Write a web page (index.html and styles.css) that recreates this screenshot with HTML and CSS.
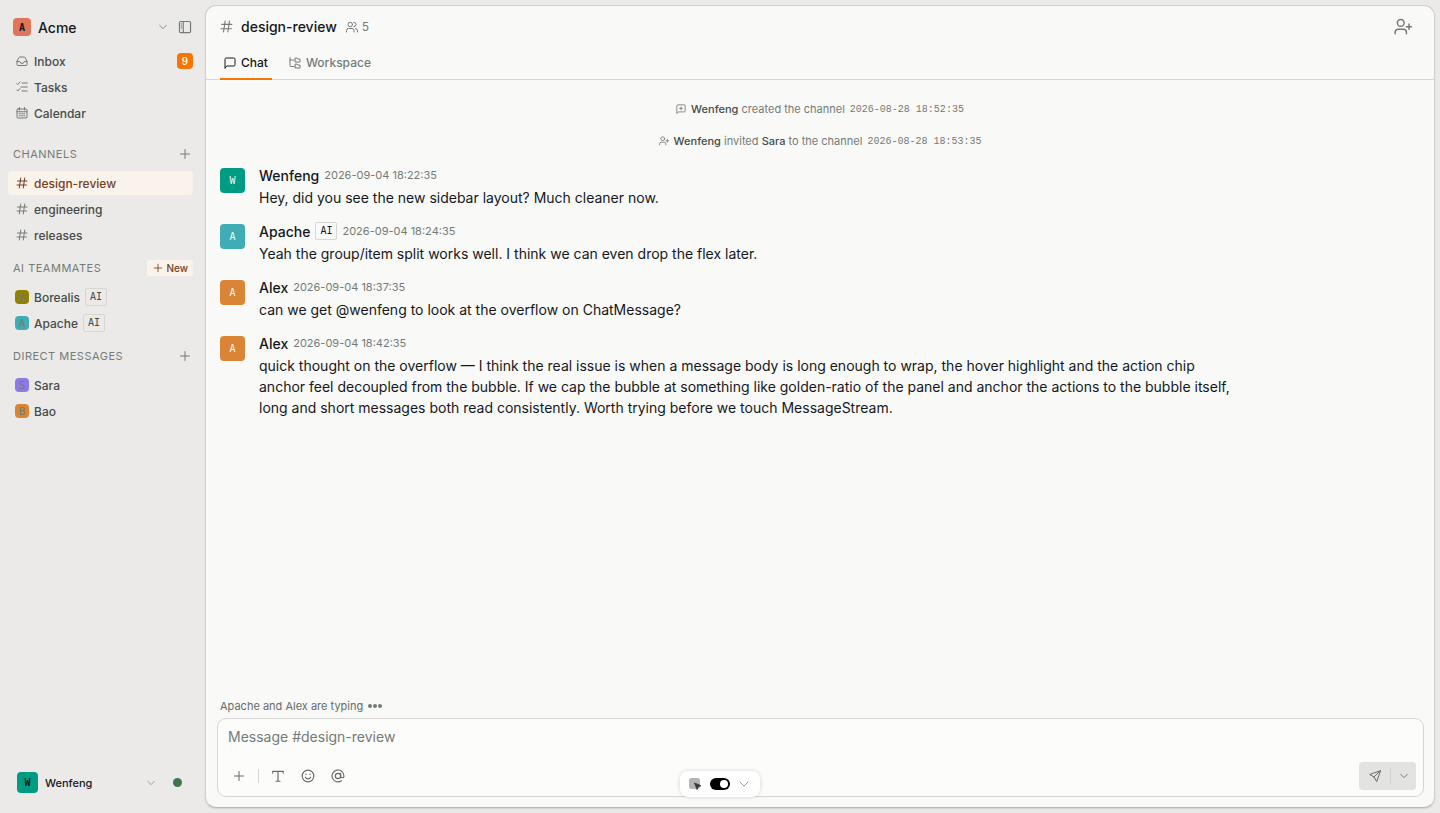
FILE: index.html
```html
<!DOCTYPE html>
<html lang="en">
<head>
<meta charset="utf-8">
<title>design-review – Acme</title>
<link rel="stylesheet" href="styles.css">
</head>
<body>
<svg class="sprite" aria-hidden="true">
  <symbol id="chevron" viewBox="0 0 24 24"><path d="m4 8 8 8 8-8"/></symbol>
  <symbol id="plus" viewBox="0 0 24 24"><path d="M12 3v18M3 12h18"/></symbol>
  <symbol id="hash" viewBox="0 0 24 24"><path d="M3 8h19M2 16h19M9.500 2l-3 20M17.500 2l-3 20"/></symbol>
  <symbol id="user-plus" viewBox="0 0 24 24"><circle cx="9" cy="6.500" r="4.500"/><path d="M1.500 21v-2a4 4 0 0 1 4-4h7a4 4 0 0 1 4 4v2M20 8v7M16.500 11.500h7"/></symbol>
</svg>
<div class="app">
  <aside class="sidebar">
    <div class="workspace">
      <button class="workspace-switch"><span class="avatar avatar-workspace coral">A</span><span class="workspace-name">Acme</span><svg class="icon icon-xs"><use href="#chevron"/></svg></button>
      <button class="icon-button" aria-label="Toggle sidebar"><svg class="icon icon-md" viewBox="0 0 24 24"><rect x="2.500" y="2.500" width="19" height="19" rx="2"/><path d="M9 2.500v19M5.500 6.500h.500M5.500 10h.500M5.500 13.500h.500"/></svg></button>
    </div>
    <nav class="list">
      <a class="item" href="#inbox"><svg class="icon icon-sm" viewBox="0 0 24 24"><path d="M2 13v6a2 2 0 0 0 2 2h16a2 2 0 0 0 2-2v-6l-3.500-7.500A2.500 2.500 0 0 0 16.300 4H7.700a2.500 2.500 0 0 0-2.200 1.500zM2 13h5.500l2 3.500h5l2-3.500H22"/></svg>Inbox<span class="count">9</span></a>
      <a class="item" href="#tasks"><svg class="icon icon-sm" viewBox="0 0 24 24"><path d="m1.500 5 2 2L8 2M1.500 18l2 2L8 15M12 4h10.500M10 12h12.500M12 20h10.500"/></svg>Tasks</a>
      <a class="item" href="#calendar"><svg class="icon icon-sm" viewBox="0 0 24 24"><rect x="2" y="4" width="20" height="18" rx="2"/><path d="M7 1v5M17 1v5M2 9.500h20M6.500 13.500h2M11 13.500h2M15.500 13.500h2M6.500 17.500h2M11 17.500h2M15.500 17.500h2"/></svg>Calendar</a>
    </nav>
    <section class="group group-first">
      <div class="group-head"><h2>CHANNELS</h2><button class="icon-button" aria-label="Add channel"><svg class="icon icon-sm"><use href="#plus"/></svg></button></div>
      <nav class="list">
        <a class="item active" href="#design-review"><svg class="icon icon-sm"><use href="#hash"/></svg>design-review</a>
        <a class="item" href="#engineering"><svg class="icon icon-sm"><use href="#hash"/></svg>engineering</a>
        <a class="item" href="#releases"><svg class="icon icon-sm"><use href="#hash"/></svg>releases</a>
      </nav>
    </section>
    <section class="group">
      <div class="group-head"><h2>AI TEAMMATES</h2><button class="new-button"><svg class="icon icon-xs"><use href="#plus"/></svg>New</button></div>
      <nav class="list">
        <a class="item item-person" href="#borealis"><span class="avatar avatar-mini olive">A</span>Borealis<span class="tag">AI</span></a>
        <a class="item item-person" href="#apache"><span class="avatar avatar-mini teal">A</span>Apache<span class="tag">AI</span></a>
      </nav>
    </section>
    <section class="group">
      <div class="group-head"><h2>DIRECT MESSAGES</h2><button class="icon-button" aria-label="New message"><svg class="icon icon-sm"><use href="#plus"/></svg></button></div>
      <nav class="list">
        <a class="item item-person" href="#sara"><span class="avatar avatar-mini violet">S</span>Sara</a>
        <a class="item item-person" href="#bao"><span class="avatar avatar-mini orange">B</span>Bao</a>
      </nav>
    </section>
    <button class="account"><span class="avatar avatar-account green">W</span><span class="account-name">Wenfeng</span><svg class="icon icon-xs"><use href="#chevron"/></svg><span class="status"></span></button>
  </aside>

  <main class="panel">
    <header class="panel-head">
      <svg class="icon icon-lg"><use href="#hash"/></svg>
      <h1>design-review</h1>
      <button class="members" aria-label="5 members"><svg class="icon icon-sm" viewBox="0 0 24 24"><circle cx="8.500" cy="7" r="4.500"/><path d="M1 22v-3a4 4 0 0 1 4-4h7a4 4 0 0 1 4 4v3M15.500 2.500a4.500 4.500 0 0 1 0 9M19 15.200a4 4 0 0 1 4 4V22"/></svg>5</button>
      <button class="icon-button invite" aria-label="Invite people"><svg class="icon icon-xl"><use href="#user-plus"/></svg></button>
    </header>
    <nav class="tabs">
      <a class="tab tab-active" href="#chat"><svg class="icon icon-sm" viewBox="0 0 24 24"><path d="M2 22V4.500A2.500 2.500 0 0 1 4.500 2h15A2.500 2.500 0 0 1 22 4.500v11a2.500 2.500 0 0 1-2.500 2.500H6z"/></svg>Chat</a>
      <a class="tab" href="#workspace"><svg class="icon icon-sm" viewBox="0 0 24 24"><path d="M2 1v16a2 2 0 0 0 2 2h6M2 6h8M13 2h3l1.500 2H22v6h-9zM13 14h3l1.500 2H22v6h-9z"/></svg>Workspace</a>
    </nav>

    <div class="stream">
      <p class="event"><svg class="icon icon-xs" viewBox="0 0 24 24"><path d="M2 22V4a2 2 0 0 1 2-2h16a2 2 0 0 1 2 2v13a2 2 0 0 1-2 2H6zM12 7v7M8.500 10.500h7"/></svg><span><b>Wenfeng</b> created the channel</span><time>2026-08-28 18:52:35</time></p>
      <p class="event"><svg class="icon icon-xs"><use href="#user-plus"/></svg><span><b>Wenfeng</b> invited <b>Sara</b> to the channel</span><time>2026-08-28 18:53:35</time></p>

      <article class="message"><span class="avatar avatar-message green">W</span><div class="body"><div class="byline"><b>Wenfeng</b><time>2026-09-04 18:22:35</time></div><p>Hey, did you see the new sidebar layout? Much cleaner now.</p></div></article>
      <article class="message"><span class="avatar avatar-message teal">A</span><div class="body"><div class="byline"><b>Apache</b><span class="tag">AI</span><time>2026-09-04 18:24:35</time></div><p>Yeah the group/item split works well. I think we can even drop the flex later.</p></div></article>
      <article class="message"><span class="avatar avatar-message orange">A</span><div class="body"><div class="byline"><b>Alex</b><time>2026-09-04 18:37:35</time></div><p>can we get @wenfeng to look at the overflow on ChatMessage?</p></div></article>
      <article class="message"><span class="avatar avatar-message orange">A</span><div class="body"><div class="byline"><b>Alex</b><time>2026-09-04 18:42:35</time></div><p>quick thought on the overflow — I think the real issue is when a message body is long enough to wrap, the hover highlight and the action chip anchor feel decoupled from the bubble. If we cap the bubble at something like golden-ratio of the panel and anchor the actions to the bubble itself, long and short messages both read consistently. Worth trying before we touch MessageStream.</p></div></article>
    </div>

    <div class="typing">Apache and Alex are typing<span class="dots"><i></i><i></i><i></i></span></div>
    <form class="composer">
      <textarea rows="1" aria-label="Message" placeholder="Message #design-review"></textarea>
      <div class="tools">
        <button type="button" class="tool" aria-label="Attach"><svg class="icon icon-sm"><use href="#plus"/></svg></button>
        <span class="divider"></span>
        <button type="button" class="tool" aria-label="Formatting"><svg class="icon icon-md" viewBox="0 0 24 24"><path d="M3 7V4h18v3M12 4v17M8.500 21h7"/></svg></button>
        <button type="button" class="tool" aria-label="Emoji"><svg class="icon icon-md" viewBox="0 0 24 24"><circle cx="12" cy="12" r="10"/><path d="M7.500 14a5 5 0 0 0 9 0M8.500 8.500v1M15.500 8.500v1"/></svg></button>
        <button type="button" class="tool" aria-label="Mention"><svg class="icon icon-md" viewBox="0 0 24 24"><circle cx="12" cy="12" r="4.500"/><path d="M16.500 7.500V13a3 3 0 0 0 5.700 0V12a10.200 10.200 0 1 0-4.200 8.200"/></svg></button>
        <div class="send">
          <button type="button" class="send-main" aria-label="Send"><svg class="icon icon-sm" viewBox="0 0 24 24"><path d="M22.500 1.500 1.500 9l8.500 5 5 8.500zM22.500 1.500 10 14"/></svg></button>
          <button type="button" class="send-more" aria-label="Send options"><svg class="icon icon-xs"><use href="#chevron"/></svg></button>
        </div>
      </div>
    </form>
  </main>

  <div class="inspector">
    <svg class="inspector-pick" viewBox="0 0 14 14"><rect x="1" y="1" width="11" height="11" rx="2.500" fill="#b5b5b5"/><path d="m6.500 6 6.500 2.700-2.700 1-1.200 2.800z" fill="#333" stroke="#444" stroke-linejoin="round"/></svg>
    <input class="switch" type="checkbox" role="switch" aria-label="Inspector" checked>
    <button class="icon-button" aria-label="Expand"><svg class="icon icon-sm"><use href="#chevron"/></svg></button>
  </div>
</div>
</body>
</html>
```
FILE: styles.css
```css
* { box-sizing: border-box; }
body {
  margin: 0;
  background: #ebeae8;
  color: #14181c;
  font-family: Inter, "Liberation Sans", sans-serif;
  font-size: 12px;
}
h1, h2, p { margin: 0; }
b { font-weight: 500; }
a { color: inherit; text-decoration: none; }
button { padding: 0; border: 0; background: none; color: inherit; font: inherit; }
.sprite { position: absolute; width: 0; height: 0; }
.icon {
  flex: none;
  fill: none;
  stroke: currentColor;
  stroke-width: 2;
  stroke-linecap: round;
  stroke-linejoin: round;
}
.icon-xs { width: 10px; height: 10px; }
.icon-sm { width: 12px; height: 12px; }
.icon-md { width: 14px; height: 14px; }
.icon-lg { width: 13px; height: 13px; }
.icon-xl { width: 18px; height: 18px; }
.icon-button { display: flex; align-items: center; justify-content: center; color: #747b77; }

.app { position: relative; display: flex; height: 100vh; }

.avatar {
  display: flex;
  flex: none;
  align-items: center;
  justify-content: center;
  border-radius: 4px;
  font-family: "DejaVu Sans Mono", monospace;
  font-size: 10px;
}
.avatar-workspace { width: 18px; height: 18px; color: #14181c; font-weight: 700; }
.avatar-mini { width: 14px; height: 14px; margin-left: -1px; font-size: 11px; color: #747b77; }
.avatar-account { width: 21px; height: 21px; font-weight: 700; }
.avatar-message { width: 25px; height: 25px; margin-top: 1px; color: #f4f8f6; }
.coral { background: #df755b; }
.olive { background: #938000; }
.teal { background: #40adb5; }
.violet { background: #8f79e8; }
.orange { background: #da8435; }
.green { background: #009b83; }

.sidebar { display: flex; flex: none; flex-direction: column; width: 205px; padding: 14px 12px 18px 8px; }
.workspace { display: flex; align-items: center; gap: 10px; height: 26px; margin-bottom: 9px; padding: 0 1px 0 5px; color: #747b77; }
.workspace-switch { display: flex; flex: 1; align-items: center; gap: 7px; }
.workspace-name { flex: 1; color: #14181c; font-size: 14px; font-weight: 500; text-align: left; }
.list { display: flex; flex-direction: column; gap: 2px; }
.item { display: flex; align-items: center; gap: 6px; height: 24px; padding-left: 8px; border-radius: 4px; color: #454c49; font-size: 12px; font-weight: 500; }
.item-person { gap: 5px; }
.item .icon { color: #747b77; }
.item.active, .item.active .icon { color: #75401f; }
.item.active { background: #f9f3ec; }
.count { display: grid; place-items: center; width: 16px; height: 16px; margin-left: auto; border-radius: 4px; background: #f77500; color: #fff; font-size: 10px; }
.group { margin-top: 12px; }
.group-first { margin-top: 20px; }
.group-head { display: flex; align-items: center; justify-content: space-between; height: 18px; margin-bottom: 8px; padding-left: 5px; }
.group-head h2 { color: #747b77; font-size: 11px; font-weight: 400; letter-spacing: 0.5px; }
.group-head .icon-button { padding-right: 2px; }
.new-button { display: flex; align-items: center; gap: 3px; height: 16px; padding: 0 5px 0 6px; border-radius: 3px; background: #f9f3ec; color: #75401f; font-size: 10px; font-weight: 500; }
.tag { padding: 0 4px; border: 1px solid #d6d7d4; border-radius: 2px; font-family: "DejaVu Sans Mono", monospace; font-size: 10px; font-weight: 400; line-height: 16px; }
.account { display: flex; align-items: center; gap: 7px; margin-top: auto; padding: 2px 11px 2px 9px; }
.account-name { flex: 1; font-size: 11px; font-weight: 500; text-align: left; }
.account .icon { color: #8c918e; }
.status { width: 9px; height: 9px; margin-left: 10px; border-radius: 50%; background: #3f764c; }

.panel {
  display: flex;
  flex: 1;
  flex-direction: column;
  min-width: 0;
  margin: 5px 5px 5px 0;
  padding-bottom: 10px;
  border: 1px solid #d0d1d0;
  border-bottom-color: #b9bbba;
  border-radius: 11px;
  background: #f9f9f7;
  box-shadow: 0 1px 2px rgba(0, 0, 0, 0.1);
}
.panel-head { display: flex; align-items: center; gap: 8px; height: 41px; padding: 0 22px 0 14px; color: #747b77; }
.panel-head h1 { color: #14181c; font-size: 14px; font-weight: 500; }
.members { display: flex; align-items: center; gap: 4px; margin-left: 1px; }
.invite { margin-left: auto; }
.tabs { display: flex; gap: 13px; height: 33px; padding: 0 14px; border-bottom: 1px solid #d6d7d4; color: #747b77; }
.tab { display: flex; align-items: center; gap: 5px; height: 33px; padding: 0 4px; border-bottom: 2px solid transparent; font-weight: 500; }
.tab-active { border-color: #f77500; color: #14181c; }

.stream { flex: 1; padding: 21px 14px 0; }
.event { display: flex; align-items: center; justify-content: center; gap: 5px; height: 16px; margin-bottom: 16px; color: #747b77; font-size: 11px; }
.event b { color: #454c49; }
.event time { font-family: "Liberation Mono", monospace; font-size: 10px; }
.message { display: flex; gap: 14px; margin-bottom: 15px; }
.event + .message { margin-top: 18px; }
.body { max-width: 81.5%; font-size: 14px; line-height: 21px; }
.byline { display: flex; align-items: center; gap: 5px; height: 16px; margin-bottom: 4px; }
.byline time { color: #747b77; font-size: 11px; }

.typing { display: flex; align-items: center; gap: 5px; height: 16px; margin-bottom: 4px; padding-left: 14px; color: #656c68; font-size: 11px; }
.dots { display: flex; gap: 1px; }
.dots i { width: 4px; height: 4px; border-radius: 50%; background: #747b77; }
.composer { margin: 0 10px 0 11px; padding: 8px 7px 6px 10px; border: 1px solid #d6d7d4; border-radius: 9px; background: #fcfcfb; }
.composer textarea { display: block; width: 100%; height: 20px; padding: 0; border: 0; outline: 0; background: none; color: #14181c; font: 400 14px/20px Inter, "Liberation Sans", sans-serif; resize: none; }
.composer textarea::placeholder { color: #747b77; }
.tools { display: flex; align-items: center; gap: 8px; margin-top: 15px; color: #656c68; }
.tool { display: grid; place-items: center; width: 22px; height: 22px; }
.divider { width: 1px; height: 14px; background: #d6d7d4; }
.send { display: flex; align-items: center; height: 28px; margin-left: auto; border-radius: 4px; background: #e3e3e1; }
.send-main, .send-more { display: grid; place-items: center; height: 16px; }
.send-main { width: 31px; }
.send-more { width: 26px; border-left: 1px solid #d0d1d0; }

.inspector {
  position: absolute;
  bottom: 16px;
  left: 50%;
  display: flex;
  align-items: center;
  gap: 8px;
  height: 26px;
  padding: 0 10px 0 8px;
  border-radius: 8px;
  background: #fff;
  box-shadow: 0 0 4px rgba(0, 0, 0, 0.16);
  transform: translateX(-50%);
}
.inspector .icon { color: #9a9a9a; }
.inspector-pick { width: 14px; height: 14px; }
.switch { display: flex; align-items: center; justify-content: flex-end; width: 20px; height: 12px; margin: 0; padding: 2px; border-radius: 6px; background: #000; appearance: none; }
.switch::before { width: 8px; height: 8px; border-radius: 50%; background: #fff; content: ""; }
```
